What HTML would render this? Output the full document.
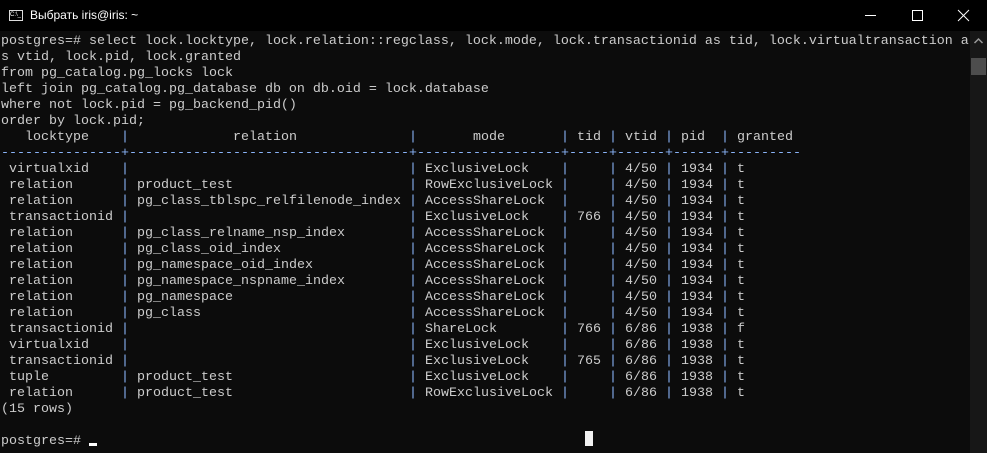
<!DOCTYPE html>
<html><head><meta charset="utf-8"><style>
*{margin:0;padding:0}
body{width:987px;height:453px;background:#0c0c0c;overflow:hidden;position:relative;font-family:"Liberation Mono",monospace;font-size:13.33px;color:#cccccc}
#tb{position:absolute;left:0;top:0;width:987px;height:31px;background:#000;color:#fff;font-family:"Liberation Sans","DejaVu Sans",sans-serif;font-size:12px}
#tb .t{position:absolute;left:30px;top:8px}
#ic{position:absolute;left:9px;top:10px;width:12px;height:9px;border:1px solid #ddd;font-size:6px;line-height:9px;color:#fff;overflow:hidden;font-family:"Liberation Sans",sans-serif}
#tx{position:absolute;left:1px;top:34px;line-height:16px;white-space:normal}
.r{height:16px;white-space:pre;overflow:hidden}
.r span{display:inline-block;overflow:hidden;vertical-align:top;height:16px;white-space:pre}
.a{width:120px}.p{width:8px;color:#8ab4f8}.b{width:280px}.c{width:144px}.d{width:40px}.e{width:48px}.g{width:72px}
.s{color:#8ab4f8}
#sb{position:absolute;left:970px;top:31px;width:17px;height:422px;background:#171717}
#th{position:absolute;left:971px;top:58px;width:15px;height:17px;background:#4d4d4d}
</style></head><body>
<div id="tb"><div id="ic">C:\_</div><div class="t">Выбрать iris@iris: ~</div>
<svg style="position:absolute;left:860px;top:0" width="127" height="31"><line x1="5" y1="15.5" x2="16" y2="15.5" stroke="#fff"/><rect x="52.5" y="10.5" width="10" height="10" fill="none" stroke="#fff"/><line x1="98" y1="10" x2="109" y2="21" stroke="#fff"/><line x1="109" y1="10" x2="98" y2="21" stroke="#fff"/></svg>
</div>
<div id="sb"></div>
<svg style="position:absolute;left:970px;top:34px" width="17" height="14"><polyline points="4.5,9 8.5,5 12.5,9" fill="none" stroke="#999" stroke-width="1.5"/></svg>
<div id="th"></div>
<div id="tx"><div class="r">postgres=# select lock.locktype, lock.relation::regclass, lock.mode, lock.transactionid as tid, lock.virtualtransaction a</div><div class="r">s vtid, lock.pid, lock.granted</div><div class="r">from pg_catalog.pg_locks lock</div><div class="r">left join pg_catalog.pg_database db on db.oid = lock.database</div><div class="r">where not lock.pid = pg_backend_pid()</div><div class="r">order by lock.pid;</div><div class="r"><span class="a">   locktype</span><span class="p">|</span><span class="b">             relation</span><span class="p">|</span><span class="c">       mode</span><span class="p">|</span><span class="d"> tid</span><span class="p">|</span><span class="e"> vtid</span><span class="p">|</span><span class="e"> pid</span><span class="p">|</span><span class="g"> granted</span></div><div class="r s"><span class="a">---------------</span><span class="p">+</span><span class="b">-----------------------------------</span><span class="p">+</span><span class="c">------------------</span><span class="p">+</span><span class="d">-----</span><span class="p">+</span><span class="e">------</span><span class="p">+</span><span class="e">------</span><span class="p">+</span><span class="g">---------</span></div><div class="r"><span class="a"> virtualxid</span><span class="p">|</span><span class="b"> </span><span class="p">|</span><span class="c"> ExclusiveLock</span><span class="p">|</span><span class="d"> </span><span class="p">|</span><span class="e"> 4/50</span><span class="p">|</span><span class="e"> 1934</span><span class="p">|</span><span class="g"> t</span></div><div class="r"><span class="a"> relation</span><span class="p">|</span><span class="b"> product_test</span><span class="p">|</span><span class="c"> RowExclusiveLock</span><span class="p">|</span><span class="d"> </span><span class="p">|</span><span class="e"> 4/50</span><span class="p">|</span><span class="e"> 1934</span><span class="p">|</span><span class="g"> t</span></div><div class="r"><span class="a"> relation</span><span class="p">|</span><span class="b"> pg_class_tblspc_relfilenode_index</span><span class="p">|</span><span class="c"> AccessShareLock</span><span class="p">|</span><span class="d"> </span><span class="p">|</span><span class="e"> 4/50</span><span class="p">|</span><span class="e"> 1934</span><span class="p">|</span><span class="g"> t</span></div><div class="r"><span class="a"> transactionid</span><span class="p">|</span><span class="b"> </span><span class="p">|</span><span class="c"> ExclusiveLock</span><span class="p">|</span><span class="d"> 766</span><span class="p">|</span><span class="e"> 4/50</span><span class="p">|</span><span class="e"> 1934</span><span class="p">|</span><span class="g"> t</span></div><div class="r"><span class="a"> relation</span><span class="p">|</span><span class="b"> pg_class_relname_nsp_index</span><span class="p">|</span><span class="c"> AccessShareLock</span><span class="p">|</span><span class="d"> </span><span class="p">|</span><span class="e"> 4/50</span><span class="p">|</span><span class="e"> 1934</span><span class="p">|</span><span class="g"> t</span></div><div class="r"><span class="a"> relation</span><span class="p">|</span><span class="b"> pg_class_oid_index</span><span class="p">|</span><span class="c"> AccessShareLock</span><span class="p">|</span><span class="d"> </span><span class="p">|</span><span class="e"> 4/50</span><span class="p">|</span><span class="e"> 1934</span><span class="p">|</span><span class="g"> t</span></div><div class="r"><span class="a"> relation</span><span class="p">|</span><span class="b"> pg_namespace_oid_index</span><span class="p">|</span><span class="c"> AccessShareLock</span><span class="p">|</span><span class="d"> </span><span class="p">|</span><span class="e"> 4/50</span><span class="p">|</span><span class="e"> 1934</span><span class="p">|</span><span class="g"> t</span></div><div class="r"><span class="a"> relation</span><span class="p">|</span><span class="b"> pg_namespace_nspname_index</span><span class="p">|</span><span class="c"> AccessShareLock</span><span class="p">|</span><span class="d"> </span><span class="p">|</span><span class="e"> 4/50</span><span class="p">|</span><span class="e"> 1934</span><span class="p">|</span><span class="g"> t</span></div><div class="r"><span class="a"> relation</span><span class="p">|</span><span class="b"> pg_namespace</span><span class="p">|</span><span class="c"> AccessShareLock</span><span class="p">|</span><span class="d"> </span><span class="p">|</span><span class="e"> 4/50</span><span class="p">|</span><span class="e"> 1934</span><span class="p">|</span><span class="g"> t</span></div><div class="r"><span class="a"> relation</span><span class="p">|</span><span class="b"> pg_class</span><span class="p">|</span><span class="c"> AccessShareLock</span><span class="p">|</span><span class="d"> </span><span class="p">|</span><span class="e"> 4/50</span><span class="p">|</span><span class="e"> 1934</span><span class="p">|</span><span class="g"> t</span></div><div class="r"><span class="a"> transactionid</span><span class="p">|</span><span class="b"> </span><span class="p">|</span><span class="c"> ShareLock</span><span class="p">|</span><span class="d"> 766</span><span class="p">|</span><span class="e"> 6/86</span><span class="p">|</span><span class="e"> 1938</span><span class="p">|</span><span class="g"> f</span></div><div class="r"><span class="a"> virtualxid</span><span class="p">|</span><span class="b"> </span><span class="p">|</span><span class="c"> ExclusiveLock</span><span class="p">|</span><span class="d"> </span><span class="p">|</span><span class="e"> 6/86</span><span class="p">|</span><span class="e"> 1938</span><span class="p">|</span><span class="g"> t</span></div><div class="r"><span class="a"> transactionid</span><span class="p">|</span><span class="b"> </span><span class="p">|</span><span class="c"> ExclusiveLock</span><span class="p">|</span><span class="d"> 765</span><span class="p">|</span><span class="e"> 6/86</span><span class="p">|</span><span class="e"> 1938</span><span class="p">|</span><span class="g"> t</span></div><div class="r"><span class="a"> tuple</span><span class="p">|</span><span class="b"> product_test</span><span class="p">|</span><span class="c"> ExclusiveLock</span><span class="p">|</span><span class="d"> </span><span class="p">|</span><span class="e"> 6/86</span><span class="p">|</span><span class="e"> 1938</span><span class="p">|</span><span class="g"> t</span></div><div class="r"><span class="a"> relation</span><span class="p">|</span><span class="b"> product_test</span><span class="p">|</span><span class="c"> RowExclusiveLock</span><span class="p">|</span><span class="d"> </span><span class="p">|</span><span class="e"> 6/86</span><span class="p">|</span><span class="e"> 1938</span><span class="p">|</span><span class="g"> t</span></div><div class="r">(15 rows)</div><div class="r"> </div><div class="r">postgres=# </div></div>
<div style="position:absolute;left:89px;top:443px;width:8px;height:3px;background:#fff"></div>
<div style="position:absolute;left:585px;top:431px;width:8px;height:15px;background:#f2f2f2"></div>
</body></html>
